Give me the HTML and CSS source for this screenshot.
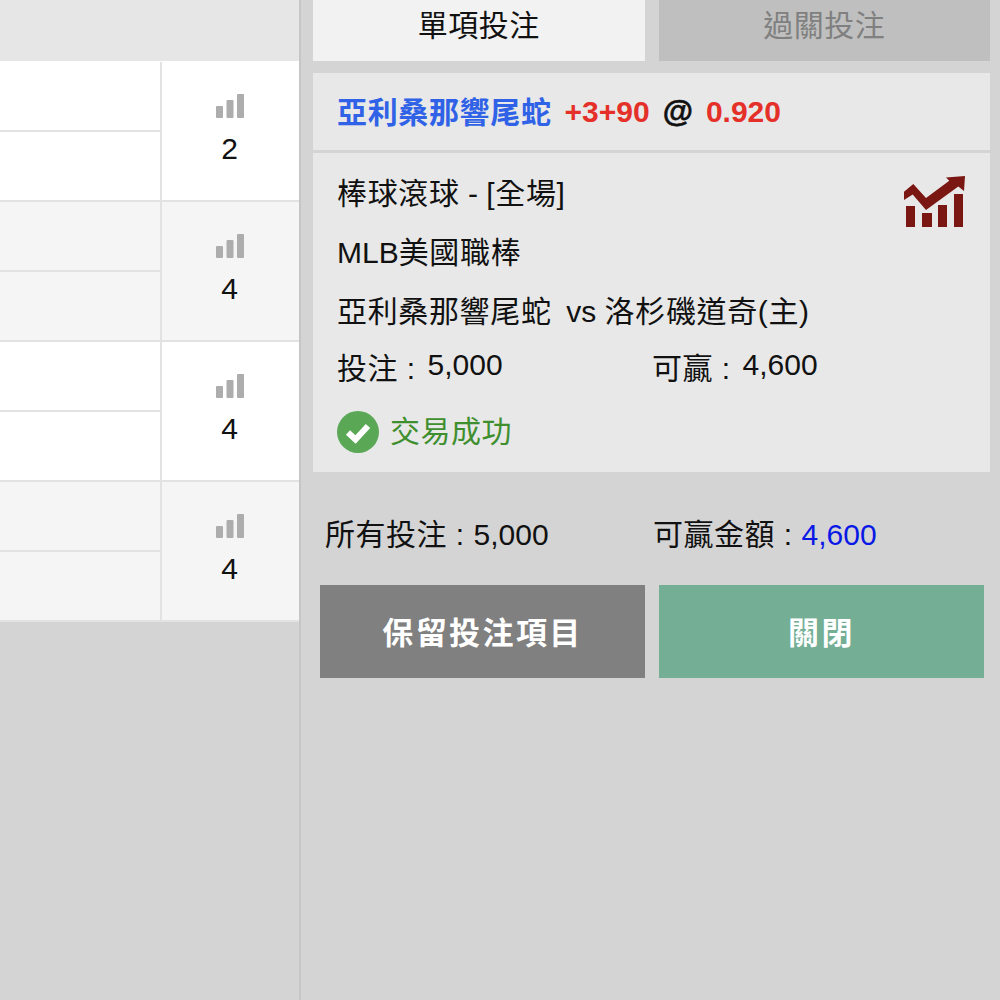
FILE: index.html
```html
<!DOCTYPE html>
<html lang="zh-Hant">
<head>
<meta charset="utf-8">
<title>投注</title>
<link rel="stylesheet" href="styles.css">
</head>
<body>
<svg class="defs" width="0" height="0" aria-hidden="true">
  <symbol id="bars" viewBox="0 0 28 24">
    <rect x="0" y="12" width="7" height="12" rx="1"/>
    <rect x="10.5" y="6" width="7" height="18" rx="1"/>
    <rect x="21" y="0" width="7" height="24" rx="1"/>
  </symbol>
</svg>
<div class="page">
  <section class="list">
    <div class="list-head"></div>
    <div class="match">
      <div class="lines"><div class="line"></div><div class="line"></div></div>
      <div class="count"><svg class="bars"><use href="#bars"/></svg><span>2</span></div>
    </div>
    <div class="match alt">
      <div class="lines"><div class="line"></div><div class="line"></div></div>
      <div class="count"><svg class="bars"><use href="#bars"/></svg><span>4</span></div>
    </div>
    <div class="match">
      <div class="lines"><div class="line"></div><div class="line"></div></div>
      <div class="count"><svg class="bars"><use href="#bars"/></svg><span>4</span></div>
    </div>
    <div class="match alt">
      <div class="lines"><div class="line"></div><div class="line"></div></div>
      <div class="count"><svg class="bars"><use href="#bars"/></svg><span>4</span></div>
    </div>
  </section>
  <section class="slip">
    <div class="tabs">
      <div class="tab active">單項投注</div>
      <div class="tab">過關投注</div>
    </div>
    <div class="card">
      <div class="card-head">
        <span class="team">亞利桑那響尾蛇</span>
        <span class="hdp">+3+90</span>
        <span class="at">@</span>
        <span class="hdp">0.920</span>
      </div>
      <div class="card-body">
        <svg class="trend" viewBox="0 0 62 52" aria-hidden="true">
          <path fill="#7a1712" d="M0 15.7 L9.3 8 L22 22 L45.3 4.7 L42 1.5 L61 0 L60 15 L54.3 10.5 L22 34 L8.7 18.5 L0 24 Z"/>
          <rect fill="#7a1712" x="2" y="30" width="9" height="21"/>
          <rect fill="#7a1712" x="18" y="37" width="10" height="14"/>
          <rect fill="#7a1712" x="34" y="29" width="9" height="22"/>
          <rect fill="#7a1712" x="50" y="18" width="9" height="33"/>
        </svg>
        <div class="info">棒球滾球<span class="lat"> - </span>[全場]</div>
        <div class="info"><span class="lat">MLB</span>美國職棒</div>
        <div class="info">亞利桑那響尾蛇<span class="lat vs">&nbsp; vs </span>洛杉磯道奇(主)</div>
        <div class="stake">
          <div class="stake-cell"><span class="stake-label">投注 :</span> <span class="stake-num">5,000</span></div>
          <div class="stake-cell"><span class="stake-label">可贏 :</span> <span class="stake-num">4,600</span></div>
        </div>
        <div class="status">
          <svg class="ok" viewBox="0 0 42 42" aria-hidden="true">
            <circle cx="21" cy="21" r="21" fill="#5aa855"/>
            <path d="M11 21.5 L18.5 28.5 L31 15" fill="none" stroke="#fff" stroke-width="6"/>
          </svg>
          <span class="status-text">交易成功</span>
        </div>
      </div>
    </div>
    <div class="totals">
      <div class="total">所有投注 : <span class="lat">5,000</span></div>
      <div class="total">可贏金額 : <span class="lat win">4,600</span></div>
    </div>
    <div class="actions">
      <div class="btn keep">保留投注項目</div>
      <div class="btn close">關閉</div>
    </div>
  </section>
</div>
</body>
</html>
```
FILE: styles.css
```css
* { box-sizing: border-box; }
html, body { margin: 0; padding: 0; }
body {
  width: 1000px;
  height: 1000px;
  overflow: hidden;
  background: #d4d4d4;
  color: #111;
  font-family: "Liberation Sans", "Noto Sans CJK TC", sans-serif;
}
.defs { position: absolute; }
.page { display: flex; height: 1000px; }

.list {
  width: 301px;
  flex: none;
  border-right: 2px solid #c6c6c6;
}
.list-head { height: 62px; background: #e6e6e6; border-bottom: 1px solid #fff; }
.match {
  display: flex;
  height: 140px;
  background: #fff;
  border-bottom: 2px solid #e2e2e2;
}
.match.alt { background: #f5f5f5; }
.lines {
  width: 162px;
  flex: none;
  display: flex;
  flex-direction: column;
  border-right: 2px solid #e2e2e2;
}
.line { flex: 1; }
.line + .line { border-top: 2px solid #e2e2e2; }
.count {
  flex: 1;
  display: flex;
  flex-direction: column;
  align-items: center;
  padding-top: 32px;
  font-size: 30px;
  line-height: 40px;
}
.bars { width: 28px; height: 24px; fill: #adadad; margin: 0 2px 11px 0; flex: none; }
.count span { margin-right: 2px; }

.slip { flex: 1; min-width: 0; padding: 0 10px 0 12px; }
.tabs { display: flex; gap: 14px; height: 61px; }
.tab {
  flex: 1;
  display: flex;
  align-items: center;
  justify-content: center;
  padding-bottom: 15px;
  background: #bfbfbf;
  color: #808080;
  font-size: 30px;
  letter-spacing: .5px;
}
.tab.active { background: #f2f2f2; color: #111; }

.card { margin-top: 12px; background: #e8e8e8; height: 399px; }
.card-head {
  height: 80px;
  padding: 0 24px;
  display: flex;
  align-items: center;
  gap: 13px;
  border-bottom: 3px solid #d4d4d4;
  font-weight: 700;
  font-size: 30px;
}
.team { color: #2f62e6; letter-spacing: .65px; margin-bottom: 3px; }
.hdp { color: #e5302a; }
.at { color: #111; font-size: 31px; -webkit-text-stroke: .6px #111; }
.card-body { position: relative; padding: 11px 24px 0; }
.trend { position: absolute; top: 23px; right: 24px; width: 62px; height: 52px; }
.info { font-size: 30px; line-height: 59px; letter-spacing: .65px; }
.lat { letter-spacing: 0; }
.vs { margin-left: -2px; }
.stake { display: flex; line-height: 56px; font-size: 30px; }
.stake-cell { width: 315px; flex: none; letter-spacing: .5px; }
.stake-num { position: relative; top: -4px; margin-left: 3px; letter-spacing: 0; }
.status {
  display: flex;
  align-items: center;
  gap: 11px;
  margin-top: 14px;
  color: #3f8f2f;
  font-size: 30px;
  letter-spacing: .5px;
}
.status-text { line-height: 38px; }
.ok { width: 42px; height: 42px; flex: none; }

.totals {
  display: flex;
  margin: 41px 0 0 12px;
  font-size: 30px;
  line-height: 44px;
}
.total { letter-spacing: .5px; }
.total:first-child { width: 328px; }
.win { color: #0a18e6; }

.actions { display: flex; gap: 14px; margin: 28px 6px 0 7px; }
.btn {
  flex: 1;
  height: 93px;
  display: flex;
  align-items: center;
  justify-content: center;
  padding-bottom: 3px;
  color: #fff;
  font-size: 31px;
  font-weight: 700;
  letter-spacing: 2.4px;
}
.keep { background: #808080; }
.close { background: #73ae95; }
```
